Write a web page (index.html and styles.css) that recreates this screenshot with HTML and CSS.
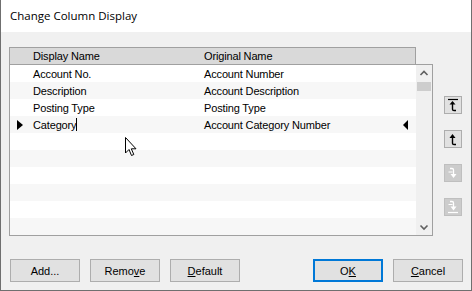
FILE: index.html
```html
<!DOCTYPE html>
<html lang="en">
<head>
    <meta charset="UTF-8">
    <title>Change Column Display</title>
    <link rel="stylesheet" href="styles.css">
</head>
<body>

<div class="window">
    <!-- Title bar -->
    <div class="titlebar">Change Column Display</div>

    <div class="content">
        <div class="main-row">
            <!-- Column grid -->
            <div class="grid">
                <div class="grid-header">
                    <span class="cell-sel"></span>
                    <span class="cell-display">Display Name</span>
                    <span class="cell-original">Original Name</span>
                </div>
                <div class="grid-body">
                    <div class="rows">
                        <div class="row">
                            <span class="cell-sel"></span>
                            <span class="cell-display">Account No.</span>
                            <span class="cell-original">Account Number</span>
                        </div>
                        <div class="row">
                            <span class="cell-sel"></span>
                            <span class="cell-display">Description</span>
                            <span class="cell-original">Account Description</span>
                        </div>
                        <div class="row">
                            <span class="cell-sel"></span>
                            <span class="cell-display">Posting Type</span>
                            <span class="cell-original">Posting Type</span>
                        </div>
                        <div class="row current">
                            <span class="cell-sel"><span class="arrow-right"></span></span>
                            <span class="cell-display">Category<span class="caret"></span></span>
                            <span class="cell-original">Account Category Number</span>
                            <span class="arrow-left"></span>
                        </div>
                        <div class="row"></div>
                        <div class="row"></div>
                        <div class="row"></div>
                        <div class="row"></div>
                        <div class="row"></div>
                        <div class="row"></div>

                        <!-- mouse pointer -->
                        <svg class="pointer" width="13" height="20" viewBox="0 0 13 20">
                            <path d="M0.5 0.5 L0.5 16 L4 12.5 L6.5 18.5 L8.8 17.5 L6.3 11.8 L11 11.8 Z" fill="#fff" stroke="#000" stroke-width="1"/>
                        </svg>
                    </div>
                    <div class="vscroll">
                        <svg class="sb-arrow" width="16" height="16" viewBox="0 0 16 16">
                            <path d="M4.5 10 L8 6.5 L11.5 10" fill="none" stroke="#606060" stroke-width="1.6"/>
                        </svg>
                        <div class="sb-thumb"></div>
                        <div class="sb-track"></div>
                        <svg class="sb-arrow" width="16" height="16" viewBox="0 0 16 16">
                            <path d="M4.5 6.5 L8 10 L11.5 6.5" fill="none" stroke="#606060" stroke-width="1.6"/>
                        </svg>
                    </div>
                </div>
            </div>

            <!-- Move buttons -->
            <div class="move-buttons">
                <div class="move-btn">
                    <svg width="16" height="16" viewBox="0 0 16 16">
                        <path d="M3 2.5 H13" stroke="#000" stroke-width="1.2"/>
                        <path d="M7.5 4 L4.5 7.5 H10.5 Z" fill="#000"/>
                        <path d="M7.5 6 V12.3 Q7.5 13.5 9 13.5 H11" fill="none" stroke="#000" stroke-width="1.4"/>
                    </svg>
                </div>
                <div class="move-btn">
                    <svg width="16" height="16" viewBox="0 0 16 16">
                        <path d="M7.5 3 L4.5 7 H10.5 Z" fill="#000"/>
                        <path d="M7.5 5.5 V12.3 Q7.5 13.5 9 13.5 H11" fill="none" stroke="#000" stroke-width="1.4"/>
                    </svg>
                </div>
                <div class="move-btn disabled">
                    <svg width="16" height="16" viewBox="0 0 16 16">
                        <path d="M5 3.5 H7 Q8.5 3.5 8.5 5 V10" fill="none" stroke="#fff" stroke-width="1.3"/>
                        <path d="M8.5 13 L5.5 9 H11.5 Z" fill="#fff"/>
                        <path d="M3.5 7 H7.5" stroke="#fff" stroke-width="1"/>
                    </svg>
                </div>
                <div class="move-btn disabled">
                    <svg width="16" height="16" viewBox="0 0 16 16">
                        <path d="M5 2.5 H7 Q8.5 2.5 8.5 4 V8.5" fill="none" stroke="#fff" stroke-width="1.3"/>
                        <path d="M8.5 11.5 L5.5 7.5 H11.5 Z" fill="#fff"/>
                        <path d="M3.5 5.5 H7.5" stroke="#fff" stroke-width="1"/>
                        <path d="M3 13.5 H13" stroke="#fff" stroke-width="1.2"/>
                    </svg>
                </div>
            </div>
        </div>

        <!-- Dialog buttons -->
        <div class="button-row">
            <div class="btn-group">
                <button class="btn">Add...</button>
                <button class="btn">Remo<u>v</u>e</button>
                <button class="btn"><u>D</u>efault</button>
            </div>
            <div class="btn-group">
                <button class="btn btn-default">O<u>K</u></button>
                <button class="btn"><u>C</u>ancel</button>
            </div>
        </div>
    </div>
</div>

</body>
</html>
```

FILE: styles.css
```css
/* Reset and basic styling */
* {
    margin: 0;
    padding: 0;
    box-sizing: border-box;
}
body {
    width: 472px;
    height: 291px;
    overflow: hidden;
    background-color: #f0f0f0;
    font-family: "Liberation Sans", Arial, sans-serif;
    font-size: 11px;
    color: #000;
}

/* Dialog window */
.window {
    width: 472px;
    height: 291px;
    border: 1px solid #6f6f6f;
    border-top: none;
    display: flex;
    flex-direction: column;
    background-color: #f0f0f0;
}
.titlebar {
    height: 32px;
    background-color: #fff;
    padding: 8px 0 0 9px;
    font-family: "Open Sans", "Noto Sans", sans-serif;
    font-size: 11.5px;
    color: #000;
}
.content {
    flex: 1;
    padding: 15px 8px 0 8px;
}
.main-row {
    display: flex;
    gap: 11px;
}

/* Grid */
.grid {
    width: 424px;
    letter-spacing: -0.15px;
}
.grid-header {
    width: 407px;
    height: 17px;
    background-color: #d9d9d9;
    border: 1px solid #a0a0a0;
    border-bottom: none;
    display: flex;
    align-items: center;
}
.grid-body {
    height: 172px;
    border: 1px solid #a0a0a0;
    background-color: #fff;
    display: flex;
}
.rows {
    flex: 1;
    position: relative;
    overflow: hidden;
}
.row {
    height: 17px;
    display: flex;
    align-items: center;
    position: relative;
}
.row:nth-child(even) {
    background-color: #f7f7f7;
}
.cell-sel {
    width: 23px;
    flex: none;
    display: flex;
    align-items: center;
    padding-left: 7px;
}
.cell-display {
    width: 171px;
    flex: none;
    white-space: nowrap;
}
.cell-original {
    flex: 1;
    white-space: nowrap;
}
.arrow-right {
    width: 0;
    height: 0;
    border-top: 5px solid transparent;
    border-bottom: 5px solid transparent;
    border-left: 6px solid #000;
}
.arrow-left {
    width: 0;
    height: 0;
    border-top: 5px solid transparent;
    border-bottom: 5px solid transparent;
    border-right: 5px solid #000;
    margin-right: 8px;
}
.caret {
    display: inline-block;
    width: 1px;
    height: 13px;
    background-color: #000;
    vertical-align: -2px;
}
.pointer {
    position: absolute;
    left: 115px;
    top: 72px;
}

/* Vertical scrollbar */
.vscroll {
    width: 16px;
    flex: none;
    display: flex;
    flex-direction: column;
    background-color: #f0f0f0;
}
.sb-arrow {
    display: block;
    flex: none;
}
.sb-thumb {
    height: 9px;
    margin: 1px 1px 0 1px;
    background-color: #cdcdcd;
}
.sb-track {
    flex: 1;
}

/* Move buttons */
.move-buttons {
    display: flex;
    flex-direction: column;
    gap: 16px;
    padding-top: 49px;
}
.move-btn {
    width: 18px;
    height: 18px;
    border: 1px solid #adadad;
    background-color: #e1e1e1;
    display: flex;
    align-items: center;
    justify-content: center;
}
.move-btn.disabled {
    background-color: #cccccc;
    border-color: #bfbfbf;
}

/* Dialog buttons */
.button-row {
    display: flex;
    justify-content: space-between;
    margin-top: 23px;
    padding-left: 1px;
}
.btn-group {
    display: flex;
    gap: 10px;
}
.btn {
    width: 70px;
    height: 23px;
    border: 1px solid #adadad;
    background-color: #e1e1e1;
    font-family: "Liberation Sans", Arial, sans-serif;
    font-size: 11px;
    color: #000;
}
.btn-default {
    border: 2px solid #0078d7;
}
```
